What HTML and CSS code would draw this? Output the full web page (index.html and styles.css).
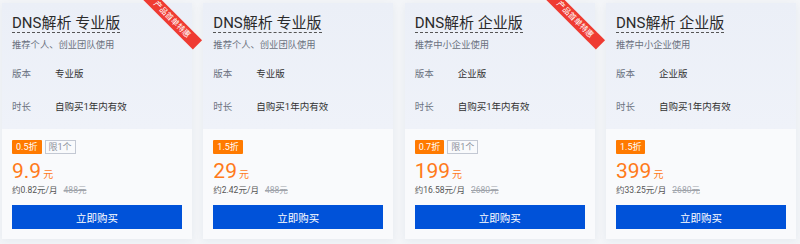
FILE: index.html
```html
<!DOCTYPE html>
<html lang="zh-CN">
<head>
<meta charset="utf-8">
<link rel="stylesheet" href="styles.css">
</head>
<body>
<div class="cards">
  <div class="card">
    <div class="ribbon">产品首单特惠</div>
    <div class="head">
      <div class="title">DNS解析 专业版</div>
      <div class="sub">推荐个人、创业团队使用</div>
      <div class="row r1"><span class="lab">版本</span><span class="val">专业版</span></div>
      <div class="row r2"><span class="lab">时长</span><span class="val">自购买1年内有效</span></div>
    </div>
    <div class="body">
      <div class="tags"><span class="tag">0.5折</span><span class="limit">限1个</span></div>
      <div class="price"><span class="num">9.9</span><span class="unit">元</span></div>
      <div class="month">约0.82元/月<s class="orig">488元</s></div>
      <button class="buy">立即购买</button>
    </div>
  </div>
  <div class="card">
    <div class="head">
      <div class="title">DNS解析 专业版</div>
      <div class="sub">推荐个人、创业团队使用</div>
      <div class="row r1"><span class="lab">版本</span><span class="val">专业版</span></div>
      <div class="row r2"><span class="lab">时长</span><span class="val">自购买1年内有效</span></div>
    </div>
    <div class="body">
      <div class="tags"><span class="tag">1.5折</span></div>
      <div class="price"><span class="num">29</span><span class="unit">元</span></div>
      <div class="month">约2.42元/月<s class="orig">488元</s></div>
      <button class="buy">立即购买</button>
    </div>
  </div>
  <div class="card">
    <div class="ribbon">产品首单特惠</div>
    <div class="head">
      <div class="title">DNS解析 企业版</div>
      <div class="sub">推荐中小企业使用</div>
      <div class="row r1"><span class="lab">版本</span><span class="val">企业版</span></div>
      <div class="row r2"><span class="lab">时长</span><span class="val">自购买1年内有效</span></div>
    </div>
    <div class="body">
      <div class="tags"><span class="tag">0.7折</span><span class="limit">限1个</span></div>
      <div class="price"><span class="num">199</span><span class="unit">元</span></div>
      <div class="month">约16.58元/月<s class="orig">2680元</s></div>
      <button class="buy">立即购买</button>
    </div>
  </div>
  <div class="card">
    <div class="head">
      <div class="title">DNS解析 企业版</div>
      <div class="sub">推荐中小企业使用</div>
      <div class="row r1"><span class="lab">版本</span><span class="val">企业版</span></div>
      <div class="row r2"><span class="lab">时长</span><span class="val">自购买1年内有效</span></div>
    </div>
    <div class="body">
      <div class="tags"><span class="tag">1.5折</span></div>
      <div class="price"><span class="num">399</span><span class="unit">元</span></div>
      <div class="month">约33.25元/月<s class="orig">2680元</s></div>
      <button class="buy">立即购买</button>
    </div>
  </div>
</div>
</body>
</html>
```
FILE: styles.css
```css
html, body {
  margin: 0;
  padding: 0;
  background: #f3f5f8;
  font-family: Roboto, "Noto Sans CJK SC", sans-serif;
}
.cards {
  display: flex;
  justify-content: space-between;
  padding: 3px 4px 0 2px;
  overflow: hidden;
  height: 241px;
}
.card {
  width: 190px;
  height: 236px;
  position: relative;
  background: #f9fafc;
  box-shadow: 0 2px 8px rgba(40, 60, 100, 0.06);
  flex: none;
}
.head {
  height: 126px;
  box-sizing: border-box;
  padding: 10px 10px 0;
  background: linear-gradient(180deg, #ebeff7 0%, #eff2f9 100%);
}
.title {
  display: inline-block;
  font-size: 15px;
  font-weight: 400;
  line-height: 18px;
  color: #2b2b2b;
  border-bottom: 1px dashed #555;
}
.sub {
  margin-top: 5px;
  font-size: 9.3px;
  line-height: 14px;
  color: #6b7280;
}
.row {
  display: flex;
  font-size: 9.5px;
  line-height: 14px;
}
.r1 { margin-top: 15px; }
.r2 { margin-top: 19px; }
.lab {
  width: 43px;
  color: #6b7280;
}
.val {
  color: #333;
}
.body {
  padding: 11px 10px 10px;
}
.tags {
  display: flex;
  gap: 3px;
  height: 14px;
}
.tag {
  background: #ff7a00;
  color: #fff;
  font-size: 9px;
  line-height: 14px;
  padding: 0 4px;
  border-radius: 1px;
}
.limit {
  border: 1px solid #c3c8d3;
  color: #8b909a;
  font-size: 9px;
  line-height: 12px;
  padding: 0 3px;
}
.price {
  margin-top: 5px;
  height: 24px;
  line-height: 24px;
  color: #ff7a1a;
}
.num {
  font-size: 21px;
}
.unit {
  font-size: 10px;
  margin-left: 2px;
}
.month {
  font-size: 8.5px;
  line-height: 14px;
  color: #555;
}
.orig {
  margin-left: 6px;
  color: #a0a4ab;
}
.buy {
  display: block;
  margin-top: 8px;
  width: 170px;
  height: 24px;
  border: 0;
  background: #0052d9;
  color: #fff;
  font-family: inherit;
  font-size: 10.5px;
  padding: 0;
  cursor: pointer;
}
.ribbon {
  position: absolute;
  width: 72px;
  height: 13px;
  right: -16px;
  top: 10px;
  transform: rotate(45deg);
  background: #ef3b32;
  color: #fff;
  font-size: 8px;
  line-height: 13px;
  text-align: center;
  white-space: nowrap;
  z-index: 2;
}
```
